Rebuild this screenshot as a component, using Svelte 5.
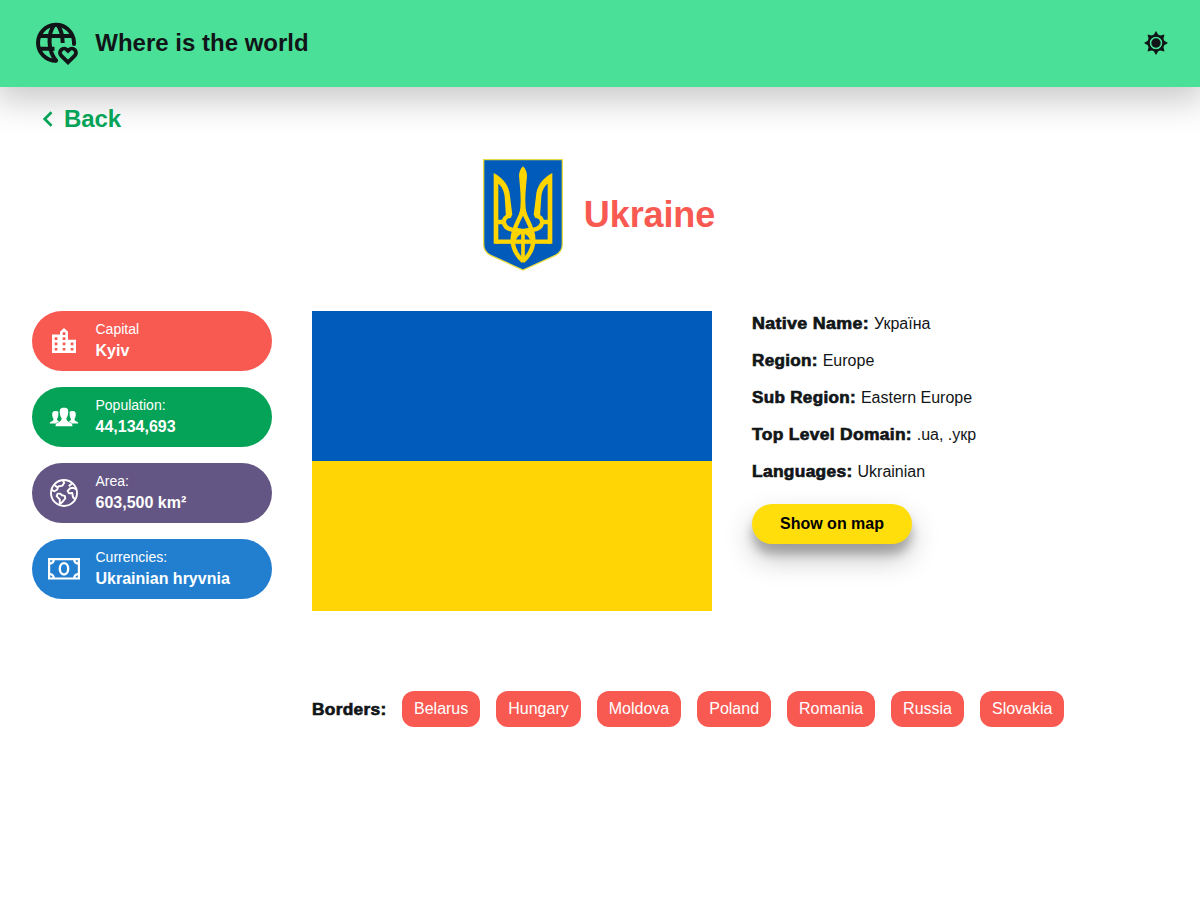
<script>
  const stats = [
    { icon: 'city', label: 'Capital', value: 'Kyiv', tone: 'red' },
    { icon: 'people', label: 'Population:', value: '44,134,693', tone: 'green' },
    { icon: 'earth', label: 'Area:', value: '603,500 km²', tone: 'purple' },
    { icon: 'money', label: 'Currencies:', value: 'Ukrainian hryvnia', tone: 'blue' }
  ];
  const details = [
    { label: 'Native Name:', value: 'Україна', width: 118, stretch: 1.115 },
    { label: 'Region:', value: 'Europe', width: 66.7, stretch: 1.068 },
    { label: 'Sub Region:', value: 'Eastern Europe', width: 104.9, stretch: 1.066 },
    { label: 'Top Level Domain:', value: '.ua, .укр', width: 160.7, stretch: 1.088 },
    { label: 'Languages:', value: 'Ukrainian', width: 101.5, stretch: 1.084 }
  ];
  const borders = ['Belarus', 'Hungary', 'Moldova', 'Poland', 'Romania', 'Russia', 'Slovakia'];
  const rays = [0, 45, 90, 135, 180, 225, 270, 315];
</script>

<header>
  <div class="brand">
    <svg class="logo" width="48" height="48" viewBox="0 0 48 48" fill="none" stroke="#111517" stroke-width="4">
      <path d="M42 24V22A18 18 0 1 0 24 40.8" stroke-linecap="round" />
      <path d="M7.5 16H40.5M7 28.7H22.5" />
      <path d="M22.5 4.5C15.8 13 15.2 31 24.8 41.5" />
      <path d="M25.5 4.5C28.8 9 30.6 15 30.7 23" />
      <path d="M36 42.3L29.2 35.6A4.1 4.1 0 0 1 35 29.8L36 30.8L37 29.8A4.1 4.1 0 0 1 42.8 35.6Z" stroke-width="3.8" />
    </svg>
    <h2>Where is the world</h2>
  </div>
  <svg class="sun" width="24" height="24" viewBox="0 0 24 24" fill="#111517">
    {#each rays as a (a)}
      <path d="M12 0L15.3 5.5H8.7Z" transform="rotate({a} 12 12)" />
    {/each}
    <circle cx="12" cy="12" r="7.4" fill="none" stroke="#111517" stroke-width="2.2" />
    <circle cx="12" cy="12" r="4.7" />
  </svg>
</header>

<main>
  <a class="back" href="#back">
    <svg width="32" height="24" viewBox="0 0 32 24" fill="none" stroke="#04a357" stroke-width="2.7"><path d="M19.5 5.2L12.7 12L19.5 18.8" /></svg>
    <span>Back</span>
  </a>

  <div class="title">
    <svg width="80" height="112" viewBox="39 27 240 336">
      <path d="M41 29H277V283Q277 306 256 316L159 360L62 316Q41 306 41 283Z" fill="#005bbb" stroke="#e8dc43" stroke-width="4" />
      {#each ['', 'translate(318 0) scale(-1 1)'] as flip (flip)}
        <g transform={flip} fill="none" stroke="#ffd500" stroke-width="13">
          <path fill-rule="evenodd" d="M71 69C101 85 118 108 120 139L127 194L120 205L108 201L104 140C102 121 95 109 85 101V281H71Z" fill="#ffd500" stroke="none" />
          <path d="M78 275H160" />
          <path d="M78 216H100M123 196C107 199 100 208 102 219C105 233 114 237 126 239C150 240 178 242 186 268" />
          <path d="M159 178C153 200 139 218 132 244C121 278 133 311 160 334" />
        </g>
      {/each}
      <path d="M159 49C151 57 147 67 147 78C150 111 154 145 151 174L144 215L159 195L174 215L167 174C164 145 168 111 171 78C171 67 167 57 159 49Z" fill="#ffd500" />
      <path d="M159 244V334" stroke="#ffd500" stroke-width="11" />
    </svg>
    <h1>Ukraine</h1>
  </div>

  <div class="content">
    <div class="stats">
      {#each stats as s (s.label)}
        <div class="stat {s.tone}">
          <svg width="32" height="32" viewBox="0 0 32 32" fill="#fff">
            {#if s.icon === 'city'}
              <path fill-rule="evenodd" d="M4 9.4h8V6.8l4-3.8 4 3.8v7.9h8V28H4ZM6.7 12.3v2.7h2.7v-2.7ZM6.7 17.6v2.7h2.7v-2.7ZM6.7 22.9v2.7h2.7v-2.7ZM14.7 7.3v2.7h2.7v-2.7ZM14.7 12.3v2.7h2.7v-2.7ZM14.7 17.6v2.7h2.7v-2.7ZM14.7 22.9v2.7h2.7v-2.7ZM22.7 17.6v2.7h2.7v-2.7ZM22.7 22.9v2.7h2.7v-2.7Z" />
            {:else if s.icon === 'people'}
              <path d="M7.2 10C4.7 10 4 11.8 4.2 14C4.4 16 4.9 17 5.5 17.8C5.5 19.3 4.9 19.9 3.5 20.4C2.4 20.9 1.8 21.3 1.8 22.4H8.2C8.9 21.6 9.8 21 11.4 20.5C9.4 20 9 19 9 17.8C9.8 17 10.2 16 10.3 14.8C10.2 13 10.3 11.7 10.5 11C9.8 10.3 8.8 10 7.2 10Z" />
              <path d="M24.8 10C27.3 10 28 11.8 27.8 14C27.6 16 27.1 17 26.5 17.8C26.5 19.3 27.1 19.9 28.5 20.4C29.6 20.9 30.2 21.3 30.2 22.4H23.8C23.1 21.6 22.2 21 20.6 20.5C22.6 20 23 19 23 17.8C22.2 17 21.8 16 21.7 14.8C21.8 13 21.7 11.7 21.5 11C22.2 10.3 23.2 10 24.8 10Z" />
              <path d="M16 6.8C12.4 6.8 11.4 8.7 11.8 11.8C12 14.2 12.5 15.8 13.6 17C13.6 19.3 12.8 20.3 10.6 21.2C8.3 22 7.5 23 7.5 25.2H24.5C24.5 23 23.7 22 21.4 21.2C19.2 20.3 18.4 19.3 18.4 17C19.5 15.8 20 14.2 20.2 11.8C20.6 8.7 19.6 6.8 16 6.8Z" />
            {:else if s.icon === 'earth'}
              <g fill="none" stroke="#fff" stroke-width="1.9" stroke-linejoin="round">
                <circle cx="16" cy="16" r="13" />
                <path d="M3.5 12.8L6.5 14.3L9.3 12.5L10.2 9.5L14.5 8.6L16.2 5.7L14.7 3.2M6.5 8L9 10.2" />
                <path d="M9.7 16.6L8.6 19.2L11.8 22.4L11.7 27.3L14.6 24.7L17.3 21.5L16.8 18.9L14 18.3L12.2 16.6Z" />
                <path d="M24.2 6.2L20.8 9.2M28.4 12.2L25.1 10.8L22 11.3L19.6 14L20.9 16.2L24.3 16L24.9 20L26.7 22" />
              </g>
            {:else}
              <path fill-rule="evenodd" d="M0 5H32V26.6H0ZM6.8 7.2C6.6 9.8 5 11.4 2.2 11.7V19.9C5 20.2 6.6 21.8 6.8 24.4H25.2C25.4 21.8 27 20.2 29.8 19.9V11.7C27 11.4 25.4 9.8 25.2 7.2ZM2.2 7.2V9.3C3.6 9.1 4.3 8.4 4.5 7.2ZM27.5 7.2C27.7 8.4 28.4 9.1 29.8 9.3V7.2ZM2.2 22.3V24.4H4.5C4.3 23.2 3.6 22.5 2.2 22.3ZM29.8 22.3C28.4 22.5 27.7 23.2 27.5 24.4H29.8Z" />
              <ellipse cx="16" cy="15.8" rx="4.2" ry="5.7" fill="none" stroke="#fff" stroke-width="2.4" />
            {/if}
          </svg>
          <div><p>{s.label}</p><strong>{s.value}</strong></div>
        </div>
      {/each}
    </div>

    <div class="flag"><div></div><div></div></div>

    <div class="details">
      {#each details as d (d.label)}
        <div class="line"><b style="width: {d.width}px"><span class="heavy" style="transform: scaleX({d.stretch})">{d.label}</span></b><span>{d.value}</span></div>
      {/each}
      <button>Show on map</button>
    </div>
  </div>

  <div class="borders">
    <b><span class="heavy">Borders:</span></b>
    {#each borders as name (name)}
      <a href="#{name}">{name}</a>
    {/each}
  </div>
</main>

<style>
  :global(body) { background: #fff; overflow-x: hidden; }
  header, main { box-sizing: border-box; font-family: "Liberation Sans", Arial, sans-serif; color: #111517; }
  h1, h2, p { margin: 0; }
  svg { display: block; flex: none; }
  a { text-decoration: none; }
  header { height: 87px; padding: 0 32px; background: #4ae097; display: flex; align-items: center; justify-content: space-between; box-shadow: 0 6px 36px 6px rgba(0, 0, 0, .23); }
  .brand { display: flex; align-items: center; gap: 15.3px; }
  h2 { font-size: 24px; line-height: 28px; padding-bottom: 2px; }
  .sun { margin-bottom: 2px; }
  main { padding: 18px 32px 0; }
  .back { display: flex; align-items: center; width: max-content; height: 28px; color: #04a357; font-size: 24px; font-weight: 700; letter-spacing: -.1px; }
  .title { display: flex; justify-content: center; gap: 21px; margin-top: 26px; align-items: center; height: 112px; padding-right: 2px; }
  h1 { color: #f85a52; font-size: 36px; line-height: 42px; letter-spacing: -.1px; }
  .content { display: grid; grid-template-columns: 240px 400px 1fr; gap: 40px; margin-top: 40px; align-items: start; }
  .stats { display: grid; gap: 16px; }
  .stat { box-sizing: border-box; height: 60px; border-radius: 30px; padding: 0 16px; display: flex; align-items: center; gap: 15.5px; color: #fff; }
  .stat p { font-size: 14px; line-height: 16px; margin: -1px 0 5px; }
  .stat strong { display: block; font-size: 16px; line-height: 18px; }
  .red { background: #f85a52; }
  .green { background: #04a357; }
  .purple { background: #645684; }
  .blue { background: #227fd0; }
  .flag div { height: 150px; background: #005bbb; }
  .flag div + div { background: #ffd505; }
  .details { display: flex; flex-direction: column; align-items: flex-start; padding-top: 3px; font-size: 16px; }
  .line { display: flex; gap: 4px; height: 19px; line-height: 19px; margin-bottom: 18px; white-space: nowrap; }
  .heavy { display: inline-block; font-weight: 700; letter-spacing: .3px; -webkit-text-stroke: .65px #111517; transform: scaleX(1.08); transform-origin: 0 50%; }
  button { width: 160px; height: 40px; margin-top: 5px; padding: 0; border: 0; border-radius: 20px; background: #ffde0b; color: #000; font: 700 16px "Liberation Sans", Arial, sans-serif; box-shadow: 0 14px 28px rgba(0, 0, 0, .25), 0 10px 10px rgba(0, 0, 0, .22); }
  .borders { display: flex; align-items: center; gap: 16px; margin: 80px 0 0 280px; font-size: 16px; }
  .borders b { width: 74px; padding-top: 1px; white-space: nowrap; }
  .borders a { box-sizing: border-box; height: 36px; padding: 0 12px; line-height: 35px; border-radius: 12px; background: #f85a52; color: #fff; }
</style>
